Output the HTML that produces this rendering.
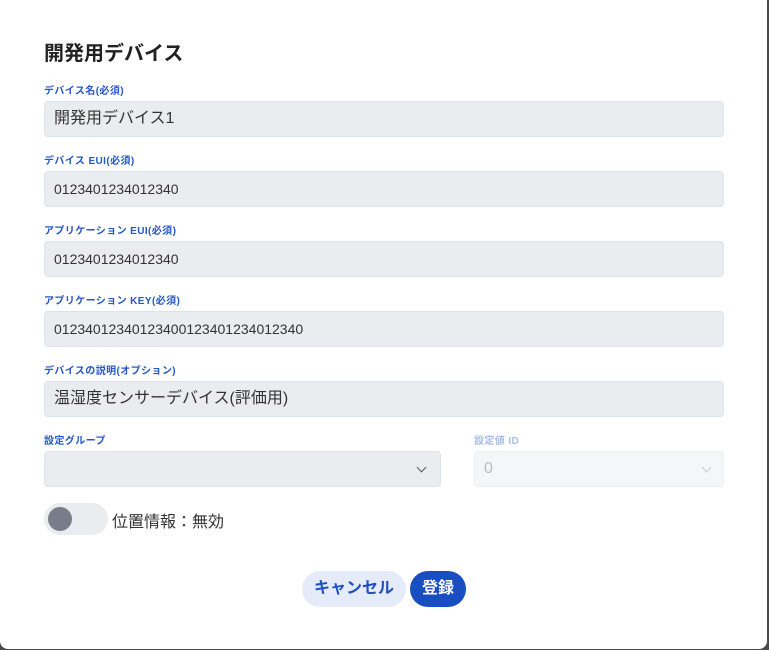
<!DOCTYPE html>
<html><head><meta charset="utf-8"><style>
html,body{margin:0;padding:0;width:769px;height:650px;background:#4a4a4a;overflow:hidden;font-family:"Liberation Sans","Noto Sans CJK JP",sans-serif}
.modal{position:absolute;left:0;top:-10px;width:767px;height:659px;background:#fff;border-radius:8px}
.abs{position:absolute}
h1{position:absolute;left:44px;top:37px;margin:0;font-size:20px;font-weight:bold;color:#222}
.lbl{position:absolute;left:44px;font-size:10px;letter-spacing:0.4px;font-weight:bold;color:#2457c8}
.inp{position:absolute;left:44px;background:#eaedef;border:1px solid #dde3ea;border-radius:4px;font-size:16px;color:#333;line-height:34px;padding-left:9px;box-sizing:border-box;width:680px;height:36px}
.chev{position:absolute;width:6px;height:6px;border-right:1.3px solid #555;border-bottom:1.3px solid #555;transform:rotate(45deg)}
.btn{position:absolute;top:571px;height:36px;border-radius:18px;font-size:16px;font-weight:bold;line-height:36px;text-align:center}
</style></head><body>
<div class="modal"></div>
<h1>開発用デバイス</h1>
<div class="lbl" style="top:82px">デバイス名(必須)</div>
<div class="inp" style="top:101px">開発用デバイス1</div>
<div class="lbl" style="top:152px">デバイス EUI(必須)</div>
<div class="inp" style="top:171px;font-size:14px">0123401234012340</div>
<div class="lbl" style="top:222px">アプリケーション EUI(必須)</div>
<div class="inp" style="top:241px;font-size:14px">0123401234012340</div>
<div class="lbl" style="top:292px">アプリケーション KEY(必須)</div>
<div class="inp" style="top:311px;font-size:14px">01234012340123400123401234012340</div>
<div class="lbl" style="top:362px">デバイスの説明(オプション)</div>
<div class="inp" style="top:381px">温湿度センサーデバイス(評価用)</div>
<div class="lbl" style="top:432px">設定グループ</div>
<div class="inp" style="top:451px;width:397px"></div>
<div class="chev" style="left:418px;top:464px"></div>
<div class="lbl" style="top:432px;left:474px;color:#a7bde8">設定値 ID</div>
<div class="inp" style="top:451px;left:474px;width:250px;background:#f4f6f7;border-color:#eef1f4;color:#bbb">0</div>
<div class="chev" style="left:703px;top:464px;border-color:#ccc"></div>
<div class="abs" style="left:44px;top:503px;width:64px;height:32px;border-radius:16px;background:#eaedef"></div>
<div class="abs" style="left:48px;top:507px;width:24px;height:24px;border-radius:12px;background:#787d89"></div>
<div class="abs" style="left:112px;top:508px;font-size:16px;color:#333">位置情報：無効</div>
<div class="btn" style="left:302px;width:104px;background:#e5ebf8;color:#1f4fc2">キャンセル</div>
<div class="btn" style="left:410px;width:56px;background:#194dc2;color:#fff">登録</div>
</body></html>
